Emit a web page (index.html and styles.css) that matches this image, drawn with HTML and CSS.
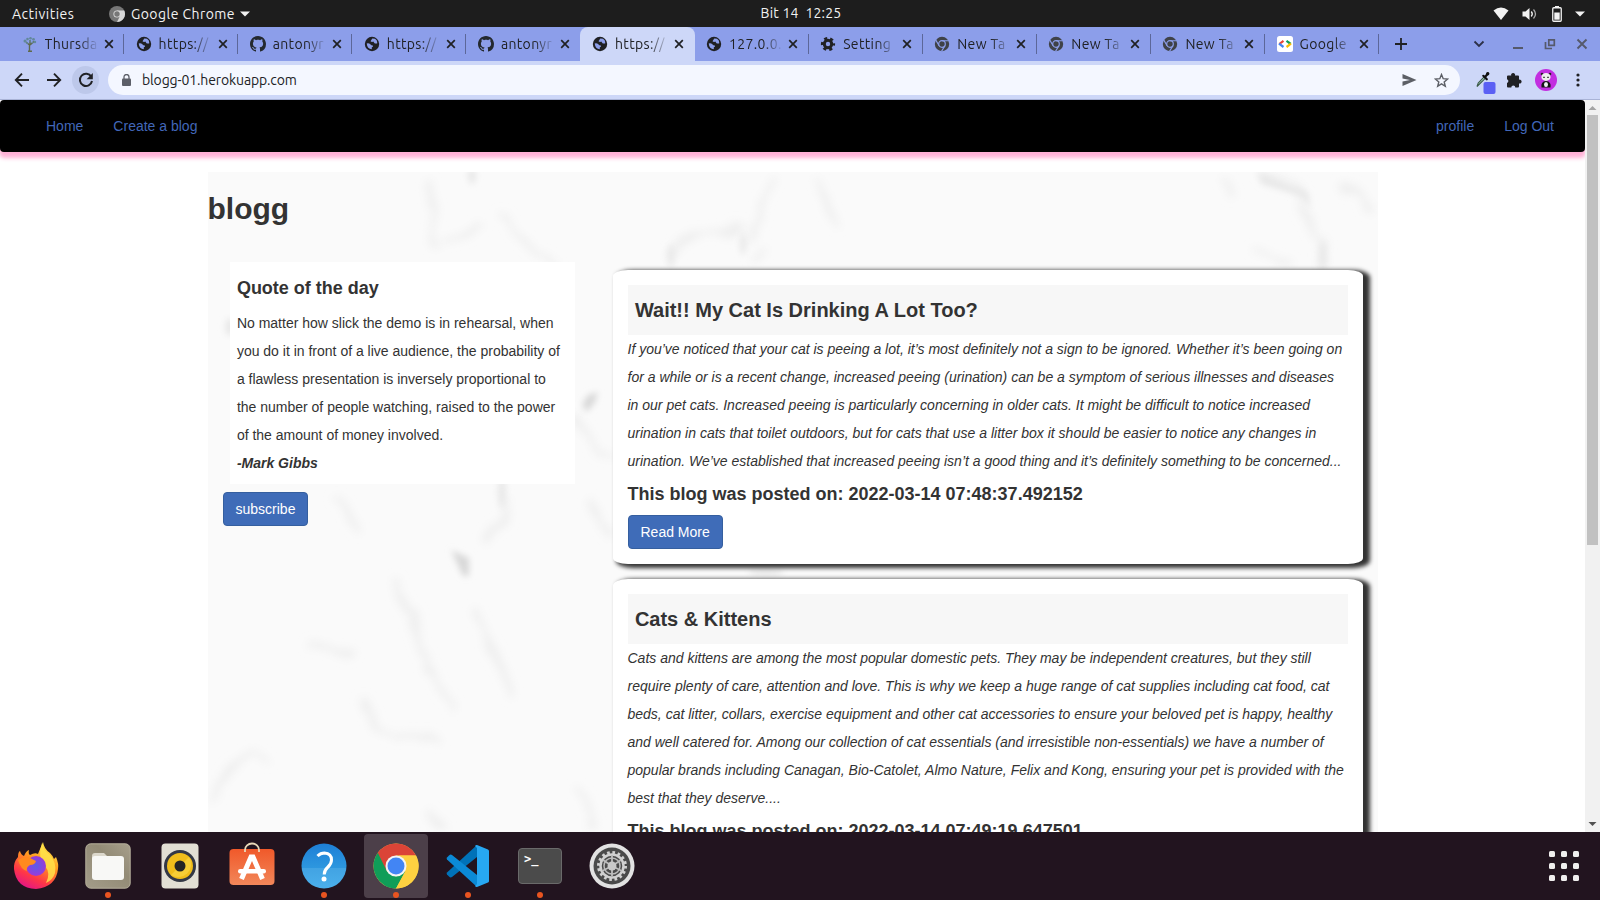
FILE: index.html
```html
<!DOCTYPE html>
<html lang="en">
<head>
<meta charset="utf-8">
<title>blogg</title>
<link rel="stylesheet" href="styles.css">
</head>
<body>
<svg class="defs" width="0" height="0">
  <defs>
    <symbol id="globe" viewBox="0 0 16 16"><circle cx="8" cy="8" r="7.2" fill="#202124"/><path d="M8.300 2.600 6.500 5.300Q8 6.500 9.300 5.600L10.500 7.300Q12.500 7.800 13.300 7.200 13.500 4 11 2.800L8.300 2.600zM2.700 7.500Q5 7 6.300 8.200 7.500 9.800 8.900 9.600 9.500 11 7.800 11.300V13.300Q3.300 13 2.700 7.500z" fill="#8c9eea" class="globe-land"/></symbol>
    <symbol id="github" viewBox="0 0 16 16"><path fill="#24292f" d="M8 0C3.580 0 0 3.580 0 8c0 3.540 2.290 6.530 5.470 7.590.4.070.55-.17.55-.38 0-.19-.01-.82-.01-1.490-2.010.37-2.530-.49-2.690-.94-.09-.23-.48-.94-.82-1.130-.28-.15-.68-.52-.01-.53.63-.01 1.080.58 1.230.82.72 1.210 1.870.87 2.330.66.07-.52.28-.87.51-1.070-1.780-.2-3.640-.89-3.640-3.950 0-.87.31-1.590.82-2.150-.08-.2-.36-1.020.08-2.120 0 0 .67-.21 2.200.82.64-.18 1.320-.27 2-.27s1.360.09 2 .27c1.530-1.040 2.200-.82 2.200-.82.44 1.100.16 1.920.08 2.120.51.56.82 1.270.82 2.150 0 3.070-1.870 3.750-3.650 3.950.29.25.54.73.54 1.480 0 1.070-.01 1.930-.01 2.200 0 .21.15.46.55.38A8.010 8.010 0 0 0 16 8c0-4.420-3.580-8-8-8z"/></symbol>
    <symbol id="chrome-mono" viewBox="0 0 16 16"><circle cx="8" cy="8" r="7.200" fill="#3f4248"/><circle cx="8" cy="8" r="3.300" fill="none" stroke="#8c9eea" stroke-width="1.200"/><path d="M8 4.700h6.800M5.100 9.700 1.700 3.900M10.900 9.700 7.500 15.400" stroke="#8c9eea" stroke-width="1.100" fill="none"/></symbol>
    <symbol id="x" viewBox="0 0 10 10"><path d="M1.200 1.200 8.800 8.800M8.800 1.200 1.200 8.800" stroke="#202124" stroke-width="1.700" fill="none"/></symbol>
  </defs>
</svg>

<header class="topbar">
  <span class="activities">Activities</span>
  <svg class="app-ico" width="16" height="16" viewBox="0 0 16 16"><circle cx="8" cy="8" r="8" fill="#777"/><path d="M8 4.500h7.200A8 8 0 0 1 8 16l3-6z" fill="#d8d8d8"/><circle cx="8" cy="8" r="3.600" fill="#ddd"/><circle cx="8" cy="8" r="2.700" fill="#777"/></svg>
  <span class="app-name">Google Chrome</span>
  <svg class="app-caret" width="10" height="6" viewBox="0 0 10 6"><path d="M0 .5h10L5 5.500z" fill="#f2f2f2"/></svg>
  <span class="clock">Bit 14&nbsp; 12:25</span>
  <span class="status">
    <svg width="16" height="14" viewBox="0 0 16 14"><path d="M.5 3.500Q8-2.500 15.500 3.500L8 13z" fill="#f2f2f2"/></svg>
    <svg width="16" height="14" viewBox="0 0 16 14"><path d="M.5 4.500h3L7.500 1v12L3.500 9.500h-3z" fill="#f2f2f2"/><path d="M9.300 4.500q2 2.500 0 5" fill="none" stroke="#f2f2f2" stroke-width="1.300"/><path d="M11.500 2.500q4 4.500 0 9" fill="none" stroke="#aaa" stroke-width="1.300"/></svg>
    <svg width="10" height="16" viewBox="0 0 10 16"><path d="M3 0h4v2H3z" fill="#f2f2f2"/><rect x=".75" y="1.750" width="8.500" height="13.500" rx="1" fill="none" stroke="#f2f2f2" stroke-width="1.300"/><path d="M2.300 6.500h5.400v7.200H2.300z" fill="#f2f2f2"/></svg>
    <svg width="10" height="6" viewBox="0 0 10 6"><path d="M0 .5h10L5 5.500z" fill="#f2f2f2"/></svg>
  </span>
</header>

<nav class="tabs">
  <div class="tab"><svg class="fav" viewBox="0 0 16 16"><path d="M7.500 15.500V9L4 6M8 9l4-3.500M8 9V4M6 15.300h4" stroke="#5f6a4c" stroke-width="1.400" fill="none"/><g fill="#62889a"><circle cx="3" cy="5" r="1.500"/><circle cx="5.500" cy="3" r="1.300"/><circle cx="8.500" cy="2.200" r="1.300"/><circle cx="11.500" cy="3.300" r="1.400"/><circle cx="13" cy="6" r="1.200"/><circle cx="5" cy="7" r="1.100"/><circle cx="8" cy="5" r="1"/><circle cx="10.500" cy="6.500" r="1"/></g></svg><span class="t">Thursda</span><svg class="x"><use href="#x"/></svg></div>
  <div class="tab"><svg class="fav"><use href="#globe"/></svg><span class="t">https://</span><svg class="x"><use href="#x"/></svg></div>
  <div class="tab"><svg class="fav"><use href="#github"/></svg><span class="t">antonyr</span><svg class="x"><use href="#x"/></svg></div>
  <div class="tab"><svg class="fav"><use href="#globe"/></svg><span class="t">https://</span><svg class="x"><use href="#x"/></svg></div>
  <div class="tab plain"><svg class="fav"><use href="#github"/></svg><span class="t">antonyr</span><svg class="x"><use href="#x"/></svg></div>
  <div class="tab active"><svg class="fav"><use href="#globe"/></svg><span class="t">https://</span><svg class="x"><use href="#x"/></svg></div>
  <div class="tab"><svg class="fav"><use href="#globe"/></svg><span class="t">127.0.0.</span><svg class="x"><use href="#x"/></svg></div>
  <div class="tab"><svg class="fav" viewBox="0 0 16 16"><circle cx="8" cy="8" r="3.700" fill="none" stroke="#202124" stroke-width="3"/><circle cx="8" cy="8" r="5.800" fill="none" stroke="#202124" stroke-width="2.600" stroke-dasharray="3.040 3.040" stroke-dashoffset="1.520"/></svg><span class="t">Setting</span><svg class="x"><use href="#x"/></svg></div>
  <div class="tab"><svg class="fav"><use href="#chrome-mono"/></svg><span class="t">New Ta</span><svg class="x"><use href="#x"/></svg></div>
  <div class="tab"><svg class="fav"><use href="#chrome-mono"/></svg><span class="t">New Ta</span><svg class="x"><use href="#x"/></svg></div>
  <div class="tab"><svg class="fav"><use href="#chrome-mono"/></svg><span class="t">New Ta</span><svg class="x"><use href="#x"/></svg></div>
  <div class="tab"><svg class="fav" viewBox="0 0 16 16"><rect width="16" height="16" rx="2.500" fill="#fff"/><g fill="none" stroke-width="2.200"><path d="M6.500 4.800 2.300 8" stroke="#ea4335"/><path d="M2 7.600 6.500 11" stroke="#4285f4"/><path d="M9.500 4.800 13.800 8" stroke="#0f9d58"/><path d="M14 7.600 9.500 11" stroke="#fbbc04"/></g></svg><span class="t">Google</span><svg class="x"><use href="#x"/></svg></div>
  <svg class="plus" width="12" height="12" viewBox="0 0 12 12"><path d="M6 0v12M0 6h12" stroke="#202124" stroke-width="1.800"/></svg>
  <div class="winctl">
    <svg width="12" height="12" viewBox="0 0 12 12"><path d="M1.500 3.500 6 8l4.500-4.500" fill="none" stroke="#2c3048" stroke-width="1.800"/></svg>
    <svg width="12" height="12" viewBox="0 0 12 12"><path d="M1 10h10" stroke="#55596b" stroke-width="2"/></svg>
    <svg width="12" height="12" viewBox="0 0 12 12"><path d="M4.800 1.800h5.500v5.500H4.800zM1.500 4v6.500H8" fill="none" stroke="#55596b" stroke-width="1.700"/></svg>
    <svg width="12" height="12" viewBox="0 0 12 12"><path d="M1.500 1.500l9 9M10.500 1.500l-9 9" stroke="#55596b" stroke-width="1.900"/></svg>
  </div>
</nav>

<div class="toolbar">
  <svg class="arrow" width="16" height="16" viewBox="0 0 16 16"><path d="M15 8H2M8 1.700 1.800 8 8 14.300" fill="none" stroke="#202124" stroke-width="1.900"/></svg>
  <svg class="arrow fwd" width="16" height="16" viewBox="0 0 16 16"><path d="M1 8h13M8 1.700 14.200 8 8 14.300" fill="none" stroke="#202124" stroke-width="1.900"/></svg>
  <span class="reload"><svg width="16" height="16" viewBox="0 0 16 16"><path d="M13.300 4.800A6.100 6.100 0 1 0 14 9" fill="none" stroke="#202124" stroke-width="2"/><path d="M14.800 1v6.200H8.600z" fill="#202124"/></svg></span>
  <div class="omnibox">
    <svg width="9" height="12" viewBox="0 0 9 12"><rect y="4.500" width="9" height="7.500" rx="1" fill="#5c5f68"/><path d="M2 5V3a2.500 2.500 0 0 1 5 0v2" fill="none" stroke="#5c5f68" stroke-width="1.300"/></svg>
    <span class="url">blogg-01.herokuapp.com</span>
    <svg class="send" width="15" height="14" viewBox="0 0 15 14"><path d="M.5 1 14.500 7 .5 13V8.500L8 7 .5 5.500z" fill="#5c5f66"/></svg>
    <svg class="star" width="15" height="15" viewBox="0 0 15 15"><path d="m7.500 1.500 1.700 4.200 4.500.3-3.500 2.900 1.100 4.400-3.800-2.400-3.800 2.400 1.100-4.400L1.300 6l4.500-.3z" fill="none" stroke="#5c5f66" stroke-width="1.400"/></svg>
  </div>
  <svg class="dropper" width="21" height="24" viewBox="0 0 21 24"><path d="M2 15.500 3.200 12 9 6l1.300 1.300L4.500 13z" fill="#cfe" stroke="#3c5a48" stroke-width="1.100"/><path d="M8.300 4.800 11.800 8.300M10 6l3-3.500" stroke="#111" stroke-width="2.200" stroke-linecap="round"/><circle cx="12.700" cy="2.800" r="1.700" fill="#111"/><rect x="8.500" y="11" width="12" height="12" rx="2" fill="#5b60f4"/></svg>
  <svg class="puzzle" width="16" height="16" viewBox="0 0 16 16"><path d="M1 4.500q0-1 1-1h3.200a2 2 0 1 1 3.800 0h3q1 0 1 1v3.200a2 2 0 1 1 0 3.800v3q0 1-1 1H9.300a2 2 0 0 0-4 0H2q-1 0-1-1V11a2 2 0 0 0 0-3.800z" fill="#202124"/></svg>
  <svg class="avatar" width="22" height="22" viewBox="0 0 22 22"><circle cx="11" cy="11" r="11" fill="#c22ee0"/><path d="M6.500 18.500q-1-6 4.500-6.500 5.500.5 4.500 6.500z" fill="#151515"/><circle cx="7" cy="5" r="1.300" fill="#222"/><circle cx="15" cy="5" r="1.300" fill="#222"/><ellipse cx="11" cy="8" rx="4.600" ry="3.900" fill="#eee"/><path d="M8 8.300h2M12 8.300h2" stroke="#555" stroke-width="1.200"/><ellipse cx="11" cy="15.500" rx="2" ry="2.500" fill="#eee"/></svg>
  <svg class="dots" width="4" height="14" viewBox="0 0 4 14"><g fill="#202124"><circle cx="2" cy="2" r="1.600"/><circle cx="2" cy="7" r="1.600"/><circle cx="2" cy="12" r="1.600"/></g></svg>
</div>

<main class="viewport">
  <div class="page">
    <nav class="navbar">
      <div class="links"><a>Home</a><a>Create a blog</a></div>
      <div class="links"><a>profile</a><a>Log Out</a></div>
    </nav>
    <div class="container">
      <svg class="marble" width="1170" height="660" viewBox="0 0 1170 660">
        <defs>
          <filter id="soft" x="0" y="0" width="1170" height="660" filterUnits="userSpaceOnUse"><feTurbulence type="fractalNoise" baseFrequency=".025" numOctaves="3" seed="4" result="n"/><feDisplacementMap in="SourceGraphic" in2="n" scale="26" xChannelSelector="R" yChannelSelector="G"/><feGaussianBlur stdDeviation="4.500"/></filter>
          <filter id="spot" x="0" y="0" width="1170" height="660" filterUnits="userSpaceOnUse"><feGaussianBlur stdDeviation="3"/></filter>
        </defs>
        <g fill="none" stroke="#efefef" stroke-width="7" stroke-linecap="round" filter="url(#soft)">
          <path d="M190 405l7 25 11 30 12 38 20 32M265 440l15 35 25 45M100 478l20-4 20 8M157 530l13 25 15 8 45 7"/>
          <path d="M5 625l15-25 20-20 20 8M125 328l25 34M225 637l10 18M370 620l15 35M295 328l-5 22-14 18M385 330l15 30"/>
          <path d="M214 10l11 30 4 30M298 44l20 25 25 23M367 244l18 18 13 25M240 65l30-8"/>
          <path d="M535 66l15-20 12-36M463 83l25-18 38-14M610 15l20 35M545 90l10-12"/>
          <path d="M1056 5l30 9 16 30 15 22-4 28M1010 10l15 17M1048 79l31 13M1130 15l35 25"/>
        </g>
        <g fill="#e8e8e8" filter="url(#spot)"><ellipse cx="264" cy="4" rx="4" ry="8"/><ellipse cx="535" cy="72" rx="3" ry="11"/><ellipse cx="463" cy="84" rx="3" ry="12"/><ellipse cx="294" cy="320" rx="4" ry="16"/><path d="M1050 0l25 10 25 10 3 18-10-14-40-12z"/><ellipse cx="1115" cy="84" rx="3" ry="14"/><ellipse cx="22" cy="155" rx="5" ry="9"/></g>
        <g fill="#d8d8d8" filter="url(#spot)"><path d="M243 378l18 8v18h-6z"/><path d="M374 233l6-10 10-3-3 10-8 10z"/><ellipse cx="558" cy="400" rx="18" ry="2"/></g>
      </svg>
      <h2 class="brand">blogg</h2>
      <div class="row">
        <aside class="side">
          <div class="quote">
            <h4>Quote of the day</h4>
            <p>No matter how slick the demo is in rehearsal, when<br>you do it in front of a live audience, the probability of<br>a flawless presentation is inversely proportional to<br>the number of people watching, raised to the power<br>of the amount of money involved.</p>
            <p class="author">-Mark Gibbs</p>
          </div>
          <button class="btn">subscribe</button>
        </aside>
        <section class="posts">
          <article class="card">
            <h3>Wait!! My Cat Is Drinking A Lot Too?</h3>
            <p>If you’ve noticed that your cat is peeing a lot, it’s most definitely not a sign to be ignored. Whether it’s been going on<br>for a while or is a recent change, increased peeing (urination) can be a symptom of serious illnesses and diseases<br>in our pet cats. Increased peeing is particularly concerning in older cats. It might be difficult to notice increased<br>urination in cats that toilet outdoors, but for cats that use a litter box it should be easier to notice any changes in<br>urination. We’ve established that increased peeing isn’t a good thing and it’s definitely something to be concerned...</p>
            <h4>This blog was posted on: 2022-03-14 07:48:37.492152</h4>
            <button class="btn">Read More</button>
          </article>
          <article class="card">
            <h3>Cats &amp; Kittens</h3>
            <p>Cats and kittens are among the most popular domestic pets. They may be independent creatures, but they still<br>require plenty of care, attention and love. This is why we keep a huge range of cat supplies including cat food, cat<br>beds, cat litter, collars, exercise equipment and other cat accessories to ensure your beloved pet is happy, healthy<br>and well catered for. Among our collection of cat essentials (and irresistible non-essentials) we have a number of<br>popular brands including Canagan, Bio-Catolet, Almo Nature, Felix and Kong, ensuring your pet is provided with the<br>best that they deserve....</p>
            <h4>This blog was posted on: 2022-03-14 07:49:19.647501</h4>
            <button class="btn">Read More</button>
          </article>
        </section>
      </div>
    </div>
  </div>
  <div class="scrollbar">
    <svg width="15" height="15" viewBox="0 0 15 15"><path d="M3.500 10h8l-4-4z" fill="#a3a3a3"/></svg>
    <div class="thumb"></div>
    <svg width="15" height="15" viewBox="0 0 15 15"><path d="M3.500 5h8l-4 4z" fill="#505050"/></svg>
  </div>
</main>

<footer class="dock">
  <div class="item">
    <svg class="firefox" width="46" height="48" viewBox="0 0 46 48">
      <defs>
        <linearGradient id="ff" x1=".8" y1="0" x2=".3" y2="1"><stop offset="0" stop-color="#fff44f"/><stop offset=".4" stop-color="#ff9a1f"/><stop offset=".75" stop-color="#ff3647"/><stop offset="1" stop-color="#e31587"/></linearGradient>
        <radialGradient id="fp"><stop offset="0" stop-color="#5a5ce8"/><stop offset="1" stop-color="#9a3ad8"/></radialGradient>
      </defs>
      <path d="M5 16q0-5 2-6 1 4 4 5 2-5 5-6-1 4 1 5 5-3 8-1 2-5 5-12 1 7 7 11 3 3 4 6l2-2q3 7 2 12-2 18-22 20Q3 47 1 28q-.5-7 4-12z" fill="url(#ff)"/>
      <path d="M29 2q1 7 7 11 8 8 6 19-2 7-9 10 5-10-1-17-8-9-3-23z" fill="#ffe24a" opacity=".85"/>
      <circle cx="23" cy="25" r="10" fill="url(#fp)"/>
      <path d="M5 19q8-5 12-2l6 3q-1 4-6 4-4 2-3 6-6-1-9-11z" fill="#ff8a1e"/>
    </svg>
  </div>
  <div class="item run"><svg width="46" height="46" viewBox="0 0 46 46"><defs><linearGradient id="fl" x1="0" y1="1" x2="1" y2="0"><stop offset="0" stop-color="#a39c89"/><stop offset=".6" stop-color="#938b76"/><stop offset="1" stop-color="#a79f8c"/></linearGradient></defs><rect x=".8" y=".8" width="44.400" height="44.400" rx="5" fill="url(#fl)" stroke="#b5ae9b"/><path d="M7 13q0-3 3-3h9l4 4v6H7z" fill="#dcd8cc"/><rect x="7" y="13" width="32" height="24" rx="3" fill="#f8f8f6"/></svg></div>
  <div class="item"><svg width="38" height="46" viewBox="0 0 38 46"><rect x=".5" y=".5" width="37" height="45" rx="4" fill="#e2dfd4"/><circle cx="19" cy="23" r="16" fill="#333845"/><circle cx="19" cy="23" r="13" fill="#f0bd1b"/><path d="M10 32A13 13 0 0 0 28 14z" fill="#fcd94a" opacity=".6"/><circle cx="19" cy="23" r="5.500" fill="#252525"/></svg></div>
  <div class="item"><svg class="bag" width="46" height="48" viewBox="0 0 46 48"><defs><linearGradient id="sw" x1="0" y1="0" x2="0" y2="1"><stop offset="0" stop-color="#f0592a"/><stop offset="1" stop-color="#f2875a"/></linearGradient></defs><rect x=".5" y="8" width="45" height="36" rx="4" fill="url(#sw)"/><path d="M16 11V9a7 6.500 0 0 1 14 0v2" fill="none" stroke="#e9d9b8" stroke-width="1.800"/><path d="M12.500 38 22 16h2l9.500 22" fill="none" stroke="#fff" stroke-width="5"/><rect x="9" y="28" width="28" height="4.500" rx="2.200" fill="#fff"/></svg></div>
  <div class="item run"><svg width="46" height="46" viewBox="0 0 46 46"><defs><linearGradient id="hp" x1="0" y1="0" x2="0" y2="1"><stop offset="0" stop-color="#1e7fd6"/><stop offset=".54" stop-color="#2d97df"/><stop offset=".55" stop-color="#42a3e3"/><stop offset="1" stop-color="#4bb0ec"/></linearGradient></defs><circle cx="23" cy="23" r="22.500" fill="url(#hp)"/><path d="M16.500 13q3-3 7-3 7 .5 7 7 0 4-4 7.500-3.300 3-3.300 7" fill="none" stroke="#fff" stroke-width="3"/><circle cx="23" cy="36" r="2.500" fill="#fff"/></svg></div>
  <div class="item run current"><svg width="46" height="46" viewBox="-23 -23 46 46"><circle r="22.500" fill="#fcd046"/><path d="M-19.500-11.250A22.500 22.500 0 0 1 19.500-11.250L20-10.500H0L-9.500 5z" fill="#db4437"/><path d="M-18.200-13.200A22.500 22.500 0 0 0 0 22.500L9.500 5 0 10.500-9 5.500z" fill="#109d58"/><path d="M0-10.500H20.100A22.500 22.500 0 0 1 0 22.500L9.500 5A10.500 10.500 0 0 0 0-10.500z" fill="#fdd141"/><circle r="10.500" fill="#f4f4f4"/><circle r="8.500" fill="#4285f4"/></svg></div>
  <div class="item run"><svg width="44" height="44" viewBox="0 0 44 44"><path d="M1 28.500 31 1v12L6 33q-1.500 1-3-.5L1 30.500q-.8-1 0-2z" fill="#0072b8"/><path d="M1 15.500q-.8-1 0-2L3 11.500q1.500-1.500 3-.5L31 31v12z" fill="#0b8ad6"/><path d="M31 1 42 5.500q1 .5 1 1.500v30q0 1-1 1.500L31 43q-1 .4-2-1l2-2V4l-2-2q1-1.400 2-1z" fill="#27a8f2"/></svg></div>
  <div class="item run"><div class="term"><span>&gt;_</span></div></div>
  <div class="item"><svg width="46" height="46" viewBox="-23 -23 46 46"><circle r="22.500" fill="#e2e2e2"/><circle r="18.500" fill="#4a4a4a"/><circle r="13.500" fill="none" stroke="#d0d0d0" stroke-width="3" stroke-dasharray="2.650 2.650"/><circle r="11.500" fill="none" stroke="#d0d0d0" stroke-width="2.500"/><circle r="8" fill="none" stroke="#bbb" stroke-width="1.500"/><path d="M0 0V-11M0 0 10 5M0 0-10 5M0 0V10M0 0 9-6M0 0-9-6" stroke="#bdbdbd" stroke-width="1.800"/><circle r="4.500" fill="#c9c9c9"/></svg></div>
  <div class="apps"><i></i><i></i><i></i><i></i><i></i><i></i><i></i><i></i><i></i></div>
</footer>
</body>
</html>
```
FILE: styles.css
```css
* { box-sizing: border-box; }
body { margin: 0; width: 1600px; height: 900px; overflow: hidden; display: flex; flex-direction: column; background: #fff; font-family: "Liberation Sans", Arial, sans-serif; font-size: 14px; color: #333; }
.defs { position: absolute; }
svg { display: block; flex: none; }
h2, h3, h4, p { margin: 0; }

/* desktop bar */
.topbar { height: 27px; flex: none; background: #1d1d1d; color: #f2f2f2; display: flex; align-items: center; padding: 0 15px 0 12px; font: 14px/27px Ubuntu, "Noto Sans", sans-serif; position: relative; }
.activities { width: 97px; letter-spacing: 0.500px; padding-top: 1px; }
.app-name { margin-left: 6px; width: 109px; white-space: nowrap; letter-spacing: 0.450px; padding-top: 1px; }
.clock { position: absolute; left: 701px; width: 200px; text-align: center; font-size: 14px; letter-spacing: 0.200px; }
.status { margin-left: auto; display: flex; align-items: center; }
.status svg:nth-child(2) { margin-left: 13px; }
.status svg:nth-child(3) { margin-left: 14px; }
.status svg:nth-child(4) { margin-left: 13px; }

/* tab strip */
.tabs { height: 34px; flex: none; background: #8c9eea; display: flex; align-items: center; padding-left: 10px; color: #202124; font: 14px/34px Ubuntu, "Noto Sans", sans-serif; }
.tab { width: 114.100px; height: 34px; flex: none; display: flex; align-items: center; padding-left: 11.500px; position: relative; }
.tab::after { content: ""; position: absolute; right: 0; top: 7px; width: 1px; height: 20px; background: #5c6799; }
.tab.plain::after, .tab.active::after { display: none; }
.tab.active { background: #cdd7f8; border-radius: 8px 8px 0 0; }
.fav { width: 16px; height: 16px; }
.active .globe-land { fill: #cdd7f8; }
.t { margin-left: 7px; width: 56px; letter-spacing: 0.350px; white-space: nowrap; -webkit-mask-image: linear-gradient(90deg, #000 60%, transparent 96%); mask-image: linear-gradient(90deg, #000 60%, transparent 96%); }
.x { width: 10px; height: 10px; margin-left: 3px; }
.plus { margin-left: 15.500px; }
.winctl { margin-left: auto; display: flex; gap: 20px; padding-right: 12px; }
.winctl svg:first-child { margin-right: 7px; }

/* address bar */
.toolbar { height: 39px; flex: none; background: #cdd7f8; border-bottom: 1px solid #a9b3d6; display: flex; align-items: center; padding: 0 19px 0 14px; }
.fwd { margin-left: 16px; }
.reload { width: 27px; height: 28px; margin-left: 10px; border-radius: 50%; background: #bdc8ea; display: flex; align-items: center; justify-content: center; }
.omnibox { width: 1352px; height: 30px; margin-left: 9px; border-radius: 15px; background: #f4f7ff; display: flex; align-items: center; padding: 0 11px 0 14px; }
.url { margin-left: 11px; font: 14px/30px Ubuntu, "Noto Sans", sans-serif; letter-spacing: -0.120px; color: #202124; }
.send { margin-left: auto; }
.star { margin-left: 17px; }
.dropper { margin: 6px 0 0 15px; }
.puzzle { margin-left: 10px; }
.avatar { margin-left: 13px; }
.dots { margin-left: 19px; }

/* page */
.viewport { height: 732px; flex: none; display: flex; overflow: hidden; }
.page { width: 1585px; height: 732px; overflow: hidden; }
.navbar { height: 52px; background: #000; border-radius: 4px; box-shadow: 0 5px 4px 1px #ffb0d6; display: flex; justify-content: space-between; padding: 0 16px 0 31px; }
.links { display: flex; }
.links a { padding: 16px 15px; line-height: 20px; color: #4267b8; }
.container { width: 1170px; margin: 20px auto 0; height: 680px; background: #fafafa; position: relative; padding-top: 20px; }
.marble { position: absolute; left: 0; top: 0; }
.brand { position: relative; font-size: 30px; line-height: 33px; }
.row { position: relative; display: flex; }
.side { width: 390px; padding: 37px 0 0 15px; }
.quote { width: 345px; margin-left: 7.200px; padding: 17px 7px 7px 7.200px; background: #fff; }
h4 { font-size: 18px; line-height: 19.800px; }
p { line-height: 28px; white-space: nowrap; }
.quote h4 { margin-bottom: 10px; }
.author { font-weight: bold; font-style: italic; }
.btn { display: block; height: 34px; padding: 0 12px; border: 1px solid #355f9f; border-radius: 4px; background: #3f6cb8; color: #fff; font: 14px/20px "Liberation Sans", Arial, sans-serif; }
.side .btn { margin-top: 8px; }
.posts { width: 780px; padding: 45px 15px 0; }
.card { background: #fff; border-radius: 2%; padding: 15px; margin-bottom: 15px; box-shadow: 5px 2px 4px 1.500px #333; }
.card h3 { height: 50px; background: #f7f7f7; font-size: 20px; line-height: 22px; padding: 14px 7.400px 0; }
.card p { font-style: italic; }
.card h4 { margin: 10px 0; }

.scrollbar { width: 15px; background: #f1f1f1; display: flex; flex-direction: column; }
.thumb { width: 11px; height: 430px; margin: 0 0 auto 2px; background: #c1c1c1; }

/* dock */
.dock { height: 68px; flex: none; background: #22141f; display: flex; align-items: center; padding-right: 21px; }
.item { width: 64px; height: 64px; margin-left: 4px; margin-right: 4px; border-radius: 4px; display: flex; align-items: center; justify-content: center; position: relative; }
.firefox, .bag { margin-bottom: 3px; }
.current { background: #4c3f49; }
.run::after { content: ""; position: absolute; left: 29px; bottom: 0; width: 6px; height: 6px; border-radius: 50%; background: #e95420; }
.term { width: 44px; height: 36px; border-radius: 4px; background: #4b4b4b; border: 1px solid #6a6a6a; padding: 3px 0 0 5px; color: #fff; font: bold 12px/14px "DejaVu Sans Mono", monospace; }
.apps { margin-left: auto; display: grid; grid-template-columns: repeat(3, 6px); gap: 6px; }
.apps i { width: 6px; height: 6px; border-radius: 1.500px; background: #f0eeee; }
```
